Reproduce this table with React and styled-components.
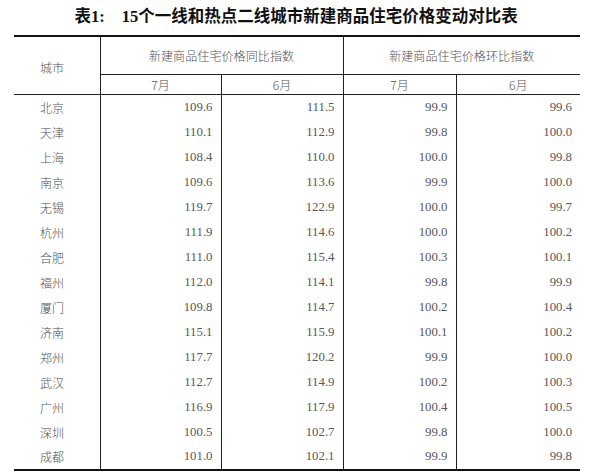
import React from 'react';
import styled, { createGlobalStyle } from 'styled-components';

const GlobalStyle = createGlobalStyle`
  html, body {
    margin: 0;
    padding: 0;
    background: #fff;
  }
  body {
    width: 600px;
    height: 472px;
    overflow: hidden;
  }
`;

const Page = styled.div`
  width: 600px;
  height: 472px;
  background: #fff;
`;

const Title = styled.h1`
  margin: 0;
  height: 35px;
  display: flex;
  align-items: center;
  justify-content: center;
  padding-right: 8px;
  font-family: "Liberation Serif", "Noto Sans CJK SC", serif;
  font-size: 16.5px;
  font-weight: 700;
  color: #111;
  line-height: 1;
`;

const TitleLabel = styled.span`
  margin-right: 17px;
`;

const Table = styled.table`
  margin-left: 14px;
  width: 566px;
  border-collapse: collapse;
  table-layout: fixed;
  border-top: 2px solid #111;
  border-bottom: 2px solid #111;
  color: #505050;
`;

const HeadCell = styled.th`
  font-family: "Noto Sans CJK SC", sans-serif;
  font-weight: 300;
  font-size: 12px;
  letter-spacing: 0.1px;
  text-align: center;
  padding: 0;
  height: ${(p) => p.$h || 19}px;
  border-left: ${(p) => (p.$first ? 'none' : '1px solid #222')};
  border-bottom: 1px solid #222;
`;

const CityHead = styled(HeadCell)`
  text-align: left;
  padding-left: 26px;
  padding-top: 4px;
`;

const Row = styled.tr`
  height: 25px;
`;

const CityCell = styled.td`
  font-family: "Noto Sans CJK SC", sans-serif;
  font-weight: 300;
  font-size: 12px;
  padding: 0 0 0 26px;
  text-align: left;
  white-space: nowrap;
`;

const NumCell = styled.td`
  font-family: "Liberation Serif", serif;
  font-size: 12.8px;
  text-align: right;
  padding: 0 8px 0 0;
  border-left: 1px solid #222;
  color: #585858;
`;

const rows = [
  ['北京', '109.6', '111.5', '99.9', '99.6'],
  ['天津', '110.1', '112.9', '99.8', '100.0'],
  ['上海', '108.4', '110.0', '100.0', '99.8'],
  ['南京', '109.6', '113.6', '99.9', '100.0'],
  ['无锡', '119.7', '122.9', '100.0', '99.7'],
  ['杭州', '111.9', '114.6', '100.0', '100.2'],
  ['合肥', '111.0', '115.4', '100.3', '100.1'],
  ['福州', '112.0', '114.1', '99.8', '99.9'],
  ['厦门', '109.8', '114.7', '100.2', '100.4'],
  ['济南', '115.1', '115.9', '100.1', '100.2'],
  ['郑州', '117.7', '120.2', '99.9', '100.0'],
  ['武汉', '112.7', '114.9', '100.2', '100.3'],
  ['广州', '116.9', '117.9', '100.4', '100.5'],
  ['深圳', '100.5', '102.7', '99.8', '100.0'],
  ['成都', '101.0', '102.1', '99.9', '99.8'],
];

const App = () => (
  <Page>
    <GlobalStyle />
    <Title>
      <TitleLabel>表1:</TitleLabel>
      15个一线和热点二线城市新建商品住宅价格变动对比表
    </Title>
    <Table>
      <colgroup>
        <col style={{ width: 86 }} />
        <col style={{ width: 121 }} />
        <col style={{ width: 122 }} />
        <col style={{ width: 113 }} />
        <col style={{ width: 124 }} />
      </colgroup>
      <thead>
        <tr>
          <CityHead rowSpan={2} $first>城市</CityHead>
          <HeadCell colSpan={2} $h={37}>新建商品住宅价格同比指数</HeadCell>
          <HeadCell colSpan={2} $h={37}>新建商品住宅价格环比指数</HeadCell>
        </tr>
        <tr>
          <HeadCell>7月</HeadCell>
          <HeadCell>6月</HeadCell>
          <HeadCell>7月</HeadCell>
          <HeadCell>6月</HeadCell>
        </tr>
      </thead>
      <tbody>
        {rows.map(([city, ...vals]) => (
          <Row key={city}>
            <CityCell>{city}</CityCell>
            {vals.map((v, i) => (
              <NumCell key={i}>{v}</NumCell>
            ))}
          </Row>
        ))}
      </tbody>
    </Table>
  </Page>
);

export default App;
